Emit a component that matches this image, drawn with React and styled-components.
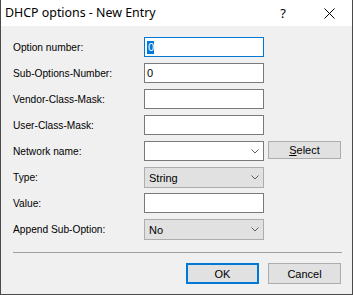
import React from "react";
import styled, { createGlobalStyle } from "styled-components";

const Global = createGlobalStyle`
    html, body {
        margin: 0;
        padding: 0;
        background: #f0f0f0;
    }
    * {
        box-sizing: border-box;
    }
`;

const Window = styled.div`
    width: 353px;
    height: 295px;
    display: flex;
    flex-direction: column;
    background: #f0f0f0;
    border: 1px solid #4a4a4a;
    border-top: none;
    font-family: "Liberation Sans", Arial, sans-serif;
    font-size: 10.2px;
    color: #000;
`;

const TitleBar = styled.div`
    height: 26px;
    display: flex;
    align-items: center;
    background: #fff;
    padding-left: 4px;
`;

const Title = styled.div`
    flex: 1;
    font-family: "Noto Sans", sans-serif;
    font-size: 12.4px;
    padding-bottom: 1px;
`;

const TitleButton = styled.div`
    width: 46px;
    height: 26px;
    display: flex;
    align-items: center;
    justify-content: center;
    font-family: "Noto Sans", sans-serif;
    font-size: 13px;
`;

const Body = styled.div`
    flex: 1;
    display: flex;
    flex-direction: column;
    padding: 11px 11px 0 11px;
`;

const Form = styled.div`
    display: grid;
    grid-template-columns: 128px 120px 73px;
    grid-auto-rows: 20px;
    column-gap: 4px;
    row-gap: 6px;
`;

const Label = styled.div`
    display: flex;
    align-items: center;
    padding-left: 1px;
    grid-column: 1;
`;

const Field = styled.div`
    grid-column: 2;
    height: ${(p) => (p.$combo ? 21 : 20)}px;
    border: ${(p) => (p.$focus ? "1px solid #0078d7" : p.$combo ? "1px solid #adadad" : "1px solid #7a7a7a")};
    background: ${(p) => (p.$combo ? "#e1e1e1" : "#fff")};
    display: flex;
    align-items: center;
    padding-left: ${(p) => (p.$combo ? 4 : 2)}px;
    padding-right: 4px;
`;

const Text = styled.span`
    flex: 1;
    font-size: 11px;
`;

const Selected = styled.span`
    background: #0078d7;
    color: #fff;
    font-size: 11px;
    line-height: 13px;
    padding: 0 0 0 1px;
`;

const Button = styled.div`
    height: ${(p) => p.$h || 21}px;
    width: 73px;
    display: flex;
    align-items: center;
    justify-content: center;
    background: #e1e1e1;
    border: ${(p) => (p.$default ? "2px solid #0078d7" : "1px solid #adadad")};
    font-size: 11px;
    align-self: start;
`;

const Separator = styled.div`
    height: 1px;
    background: #a0a0a0;
    margin: 13px 0 10px 1px;
    width: 329px;
`;

const Footer = styled.div`
    display: flex;
    justify-content: flex-end;
    gap: 9px;
`;

const Chevron = () => (
    <svg width="8" height="5" viewBox="0 0 8 5">
        <path d="M0.5 0.5 L4 4 L7.5 0.5" fill="none" stroke="#606060" strokeWidth="1" />
    </svg>
);

const Close = () => (
    <svg width="11" height="11" viewBox="0 0 11 11">
        <path d="M0.5 0.5 L10.5 10.5 M10.5 0.5 L0.5 10.5" stroke="#000" strokeWidth="1" />
    </svg>
);

const rows = [
    { label: "Option number:", focus: true, value: "0" },
    { label: "Sub-Options-Number:", value: "0" },
    { label: "Vendor-Class-Mask:" },
    { label: "User-Class-Mask:" },
    { label: "Network name:", dropdown: true, select: true },
    { label: "Type:", combo: true, value: "String" },
    { label: "Value:" },
    { label: "Append Sub-Option:", combo: true, value: "No" },
];

export default function App() {
    return (
        <>
            <Global />
            <Window>
                <TitleBar>
                    <Title>DHCP options - New Entry</Title>
                    <TitleButton>?</TitleButton>
                    <TitleButton>
                        <Close />
                    </TitleButton>
                </TitleBar>
                <Body>
                    <Form>
                        {rows.map((r) => (
                            <React.Fragment key={r.label}>
                                <Label>{r.label}</Label>
                                <Field $focus={r.focus} $combo={r.combo}>
                                    {r.focus ? (
                                        <>
                                            <Selected>{r.value}</Selected>
                                            <Text />
                                        </>
                                    ) : (
                                        <Text>{r.value}</Text>
                                    )}
                                    {(r.combo || r.dropdown) && <Chevron />}
                                </Field>
                                {r.select && (
                                    <Button $h={18}>
                                        <span>
                                            <u>S</u>elect
                                        </span>
                                    </Button>
                                )}
                            </React.Fragment>
                        ))}
                    </Form>
                    <Separator />
                    <Footer>
                        <Button $default>OK</Button>
                        <Button>Cancel</Button>
                    </Footer>
                </Body>
            </Window>
        </>
    );
}
